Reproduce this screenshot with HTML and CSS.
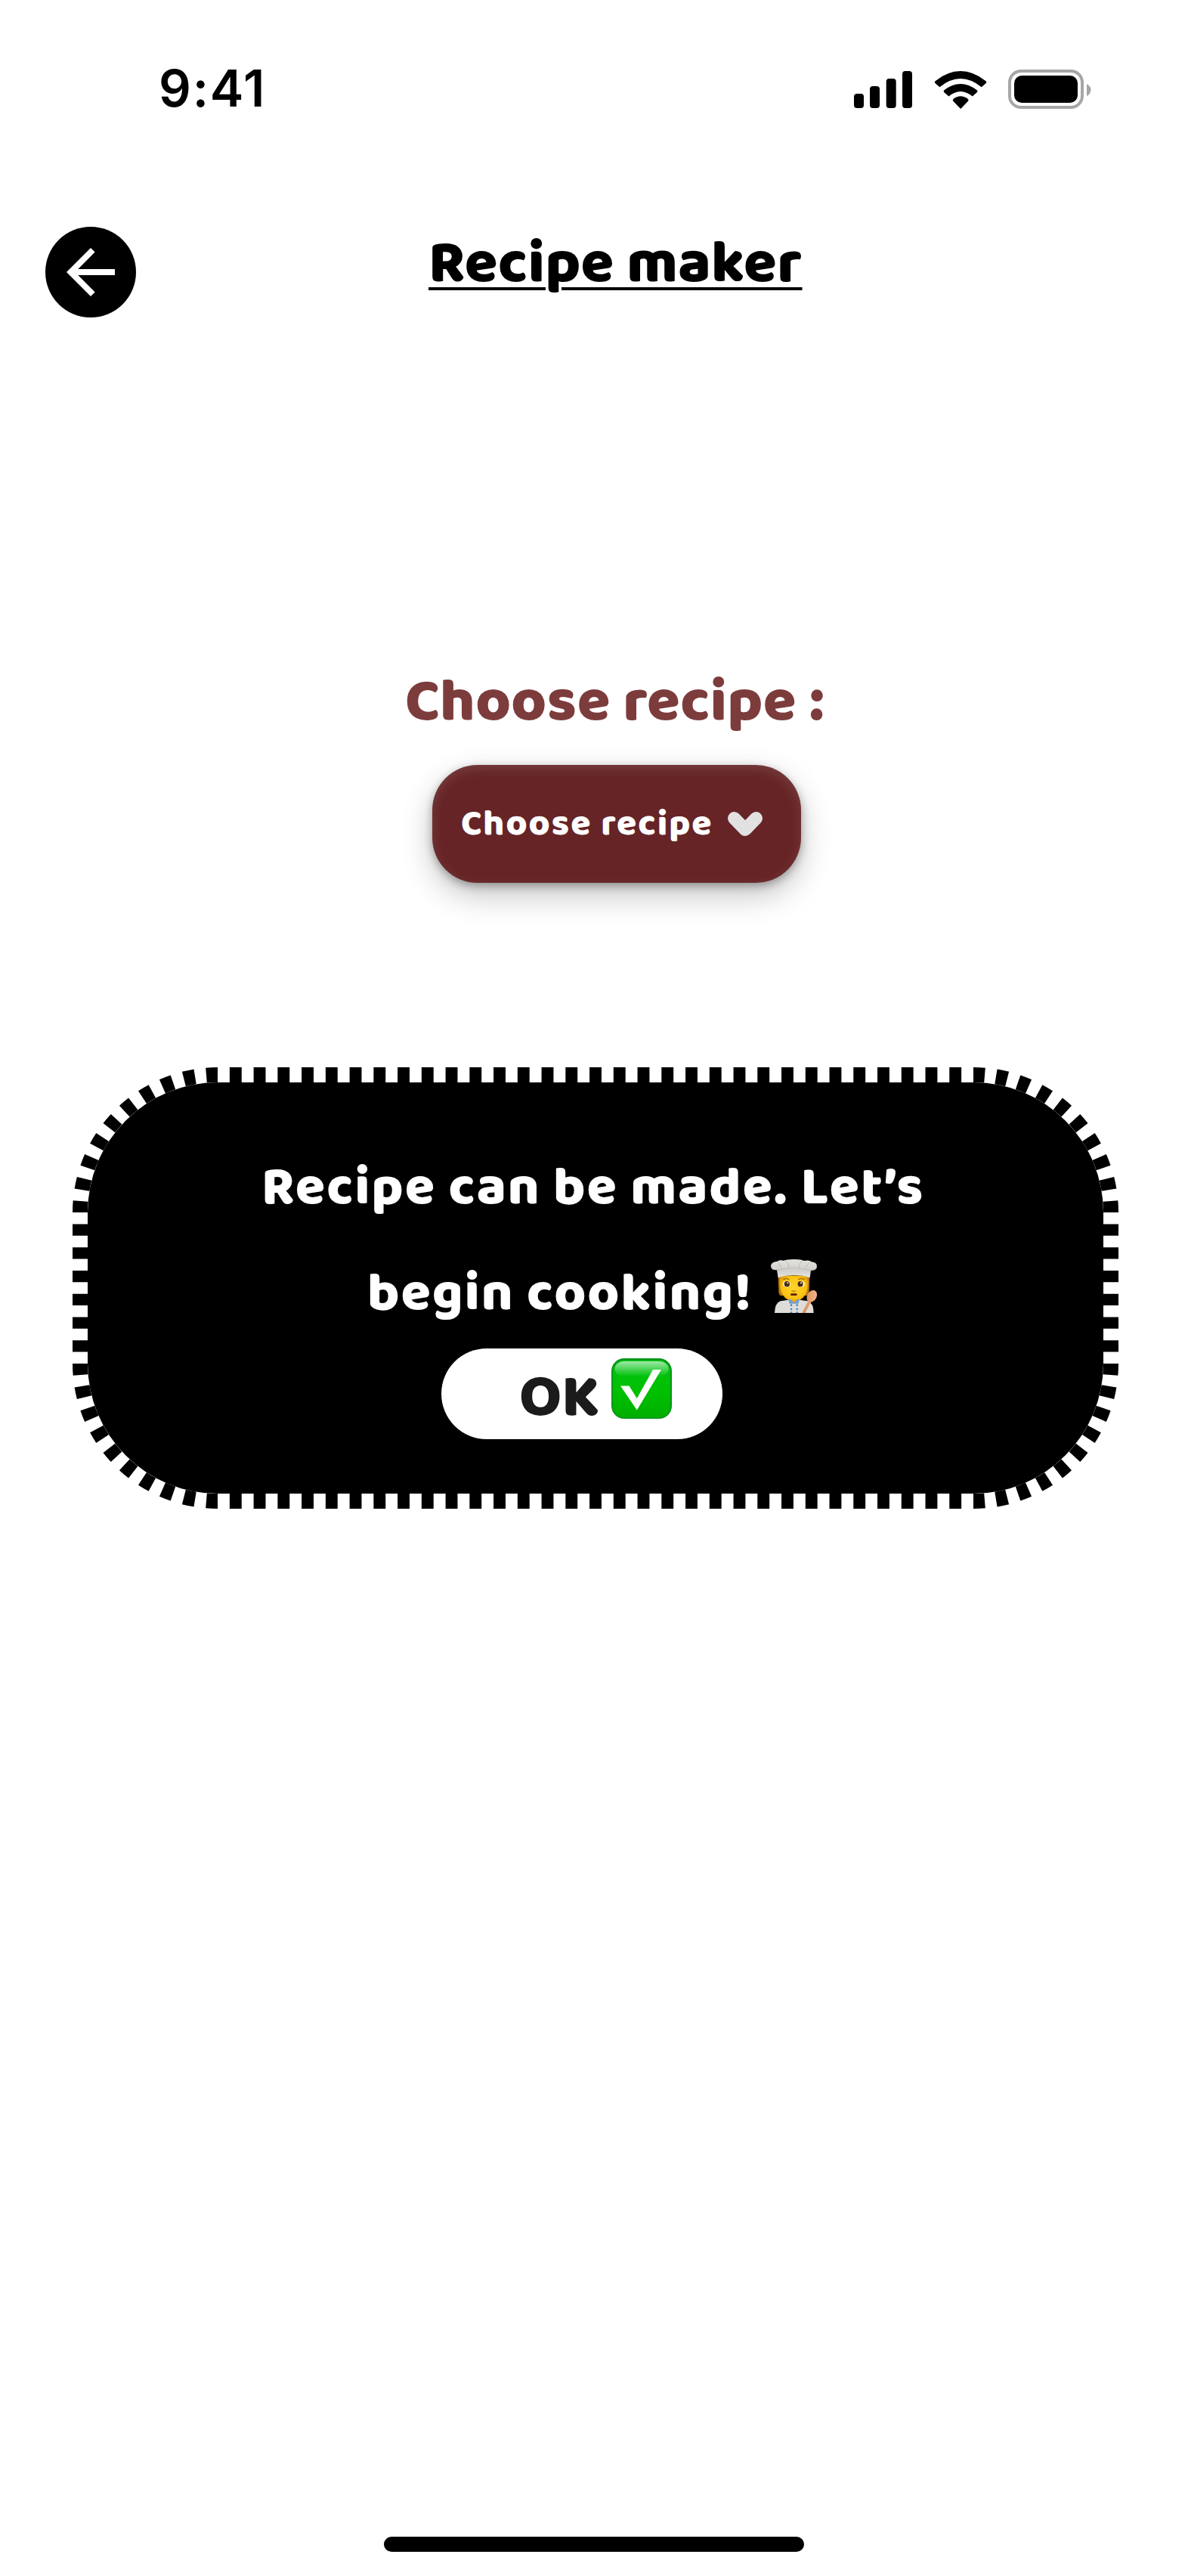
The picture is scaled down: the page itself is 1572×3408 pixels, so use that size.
FILE: index.html
```html
<!DOCTYPE html>
<html lang="en">
<head>
<meta charset="utf-8">
<title>Recipe maker</title>
<link rel="stylesheet" href="styles.css">
</head>
<body>
<div class="screen">
  <div class="status">
    <span class="time">9:41</span>
    <svg class="signals" viewBox="1130 90 316 56" aria-hidden="true">
      <rect x="1130" y="124" width="13" height="19" rx="4"/>
      <rect x="1151" y="114" width="13" height="29" rx="4"/>
      <rect x="1172.7" y="104" width="13" height="39" rx="4"/>
      <rect x="1194" y="94" width="13" height="49" rx="4"/>
      <path d="M1237.6 107.2Q1236.2 108.8 1237.6 110.2L1243.4 115.2Q1271 92.800 1298.700 115.200L1304.500 110.200Q1306 108.800 1304.500 107.200Q1271 81 1237.600 107.200Z"/>
      <path d="M1249.400 119.200Q1248 120.800 1249.400 122.200L1255.500 127.500Q1271 114.400 1286.700 127.500L1292.700 122.200Q1294.200 120.800 1292.700 119.200Q1271 102.700 1249.400 119.200Z"/>
      <path d="M1261.500 131Q1260.200 132.500 1261.500 134L1271.200 144L1280.800 134Q1282.200 132.500 1280.800 131Q1271 123.500 1261.500 131Z"/>
      <rect class="battery-shell" x="1336" y="94" width="96" height="48" rx="15"/>
      <rect x="1342" y="100" width="84" height="36" rx="10"/>
      <path class="battery-tip" d="M1438 111Q1443.500 114 1443.500 119T1438 127.300Z"/>
    </svg>
  </div>

  <header class="header">
    <svg class="back" viewBox="0 0 120 120" role="img" aria-label="Back">
      <circle cx="60" cy="60" r="60"/>
      <path fill="#fff" d="M28 60 60 28 65.600 33.600 43.300 56H92V64H43.300L65.600 86.400 60 92Z"/>
    </svg>
    <h1 class="title">Recipe maker</h1>
  </header>

  <main class="main">
    <h2 class="label">Choose recipe :</h2>
    <button class="picker">
      <span class="picker-text">Choose recipe</span>
      <svg class="picker-arrow" viewBox="0 0 46 32" aria-hidden="true">
        <path d="M8.500 8.500 23 23.500 37.500 8.500" fill="none" stroke="#e1e1e1" stroke-width="17" stroke-linecap="round" stroke-linejoin="round"/>
      </svg>
    </button>

    <section class="dialog">
      <svg class="frame" viewBox="0 0 1384 584" aria-hidden="true">
        <rect x="20" y="20" width="1344" height="544" rx="172"/>
        <g class="edge">
          <path pathLength="63" d="M192 10H1192"/>
          <path pathLength="63" d="M192 574H1192"/>
          <path pathLength="13" d="M10 192V392"/>
          <path pathLength="13" d="M1374 192V392"/>
        </g>
        <g class="corner">
          <path pathLength="19" d="M10 192A182 182 0 0 1 192 10"/>
          <path pathLength="19" d="M1192 10A182 182 0 0 1 1374 192"/>
          <path pathLength="19" d="M1374 392A182 182 0 0 1 1192 574"/>
          <path pathLength="19" d="M192 574A182 182 0 0 1 10 392"/>
        </g>
      </svg>
      <p class="message">
        <span class="line line-one">Recipe can be made. Let’s</span>
        <span class="line"><span class="line-two">begin cooking!</span>
          <svg class="cook" viewBox="60 48 183 213" role="img" aria-label="Cook">
            <defs>
              <linearGradient id="hat" x1="0" y1="0" x2="0" y2="1"><stop offset="0" stop-color="#e4e2de"/><stop offset=".6" stop-color="#d2d0cb"/><stop offset="1" stop-color="#e6e4df"/></linearGradient>
              <radialGradient id="face" cx=".5" cy=".45" r=".6"><stop offset="0" stop-color="#ffd52c"/><stop offset=".7" stop-color="#fbc312"/><stop offset="1" stop-color="#d99508"/></radialGradient>
              <linearGradient id="spoon"><stop offset="0" stop-color="#d98e5d"/><stop offset="1" stop-color="#f0b184"/></linearGradient>
            </defs>
            <path fill="#b97d13" d="M89 112H214L212 168Q212 186 204 192H98Q90 184 91 170Z"/>
            <path fill="#e5a50a" d="M129 190H174V214L152 226 129 214Z"/>
            <path fill="url(#face)" d="M96 114H207Q210 164 198 188 178 216 152 216 124 214 106 188 92 160 96 114Z"/>
            <path fill="#dfddd9" d="M75 261Q76 222 98 214L130 209 152 224 173 209 206 214Q230 222 230 261Z"/>
            <path fill="#6f9ed6" d="M130 208 138 206 152 221 166 206 174 208 169 224 152 224 134 224Z"/>
            <g fill="#3f83cf"><circle cx="141" cy="230" r="4"/><circle cx="164" cy="230" r="4"/><circle cx="141" cy="246" r="4"/><circle cx="164" cy="246" r="4"/><circle cx="141" cy="260" r="4"/><circle cx="164" cy="260" r="4"/></g>
            <ellipse cx="123" cy="146" rx="15" ry="12" fill="#fff"/><ellipse cx="179" cy="146" rx="15" ry="12" fill="#fff"/>
            <circle cx="124" cy="146" r="11" fill="#4b2c0b"/><circle cx="177" cy="146" r="11" fill="#4b2c0b"/>
            <circle cx="127" cy="142" r="3" fill="#fff"/><circle cx="180" cy="142" r="3" fill="#fff"/>
            <g fill="none" stroke="#7b4c0c" stroke-width="3" stroke-linecap="round"><path d="M110 128Q120 121 132 127"/><path d="M170 127Q182 121 192 128"/></g>
            <path d="M143 173Q151 178 159 173" fill="none" stroke="#c98407" stroke-width="4"/>
            <rect x="138" y="184" width="26" height="8" rx="4" fill="#5c220f"/>
            <path fill="url(#hat)" d="M89 121 84 91Q60 92 60 76 60 58 86 56 94 50 112 53 122 48 152 48 182 48 192 54 212 49 221 58 243 60 243 76 243 93 219 93L215 121Q152 101 89 121Z"/>
            <g fill="none" stroke="#a9a7a2" stroke-width="2.500" opacity=".7"><path d="M84 91Q152 73 219 93"/><path d="M103 84 90 62"/><path d="M132 80Q130 64 120 54"/><path d="M170 80Q174 64 184 54"/><path d="M198 84Q204 70 214 60"/></g>
            <path fill="url(#spoon)" d="M184 261 207 216Q199 202 206 187 216 170 231 171 244 174 243 192 240 212 219 219L196 261Z"/>
          </svg>
        </span>
      </p>
      <button class="ok">
        <span class="ok-text">OK</span>
        <svg class="check" viewBox="0 0 80 80" role="img" aria-label="Check">
          <defs>
            <linearGradient id="green" x1="0" y1="0" x2="0" y2="1"><stop offset="0" stop-color="#00c314"/><stop offset=".55" stop-color="#00c000"/><stop offset="1" stop-color="#00ae00"/></linearGradient>
            <linearGradient id="gloss" x1="0" y1="0" x2="0" y2="1"><stop offset="0" stop-color="#fff" stop-opacity=".62"/><stop offset="1" stop-color="#fff" stop-opacity="0"/></linearGradient>
          </defs>
          <rect width="80" height="80" rx="17" fill="#06941a"/>
          <rect x="2" y="2.500" width="76" height="76" rx="15" fill="url(#green)"/>
          <rect x="4.500" y="4" width="71" height="20" rx="12" fill="url(#gloss)"/>
          <path fill="#fff" d="M12 36.500H23.500L33.800 53 55 15H66L33.800 68.500Z"/>
        </svg>
      </button>
    </section>
  </main>

  <div class="home"></div>
</div>
</body>
</html>
```
FILE: styles.css
```css
* {
  box-sizing: border-box;
}

body {
  margin: 0;
  background: #fff;
  color: #000;
  font-family: "Baloo 2", "Baloo Bhai 2", "Open Sans", sans-serif;
  font-weight: 800;
}

.screen {
  display: flex;
  flex-direction: column;
  width: 1572px;
  height: 3408px;
  padding-bottom: 32px;
  background: #fff;
}

h1, h2, p {
  margin: 0;
}

button {
  border: 0;
  padding: 0;
  font-family: inherit;
  font-weight: inherit;
}

.title, .label, .message, .picker-text, .ok-text {
  white-space: nowrap;
}

.status {
  display: flex;
  justify-content: space-between;
  height: 300px;
  padding: 90px 126px 0 210px;
}

.time {
  font: 600 67px/54px Inter, sans-serif;
  letter-spacing: 1.8px;
}

.signals {
  width: 316px;
  height: 56px;
}

.battery-shell {
  fill: none;
  stroke: #a6a6a6;
  stroke-width: 4;
}

.battery-tip {
  fill: #a6a6a6;
}

.header {
  display: flex;
  height: 120px;
  padding-left: 60px;
  gap: 387px;
}

.back {
  width: 120px;
  height: 120px;
}

.title {
  font-size: 80px;
  font-weight: 800;
  line-height: 100px;
  letter-spacing: .33px;
  text-decoration: underline;
  text-decoration-thickness: 4px;
  text-underline-offset: 8px;
}

.main {
  display: flex;
  flex-direction: column;
  align-items: flex-start;
}

.label {
  margin: 460px 0 0 536px;
  color: #7d3c3c;
  font-size: 80px;
  font-weight: 800;
  line-height: 100px;
  letter-spacing: .33px;
}

.picker {
  display: flex;
  align-items: center;
  width: 488px;
  height: 156px;
  margin: 32px 0 0 572px;
  padding-left: 38px;
  border-radius: 60px;
  background: #662426;
  color: #fff;
  box-shadow: 0 16px 40px rgba(0, 0, 0, .24), 0 4px 12px rgba(0, 0, 0, .3), inset 0 5px 16px rgba(255, 255, 255, .12);
}

.picker-text {
  width: 353px;
  padding-top: 2px;
  font-size: 48px;
  line-height: 60px;
  letter-spacing: 1.95px;
  text-align: left;
}

.picker-arrow {
  width: 46px;
  height: 32px;
}

.dialog {
  position: relative;
  width: 1384px;
  height: 584px;
  margin: 244px 0 0 96px;
}

.frame {
  position: absolute;
  inset: 0;
}

.edge path,
.corner path {
  fill: none;
  stroke: #000;
  stroke-width: 20;
  stroke-dasharray: 1 1;
}

.edge path {
  stroke-dashoffset: 1;
}

.message {
  position: relative;
  padding-top: 90px;
  color: #fff;
  font-size: 72px;
  letter-spacing: 1.95px;
}

.line {
  display: flex;
  height: 140px;
  padding-left: 390px;
  line-height: 140px;
}

.line-one {
  padding-left: 250px;
}

.line-two {
  width: 534px;
}

.cook {
  width: 61px;
  height: 71px;
  margin-top: 24px;
}

.ok {
  position: relative;
  display: flex;
  width: 372px;
  height: 120px;
  margin: 2px 0 0 488px;
  padding-left: 103px;
  border-radius: 60px;
  background: #fff;
  color: #1b1b1b;
}

.ok-text {
  width: 122px;
  font-size: 80px;
  line-height: 132px;
  text-align: left;
}

.check {
  width: 80px;
  height: 80px;
  margin-top: 13px;
}

.home {
  align-self: center;
  width: 556px;
  height: 20px;
  margin-top: auto;
  border-radius: 10px;
  background: #000;
}
```
